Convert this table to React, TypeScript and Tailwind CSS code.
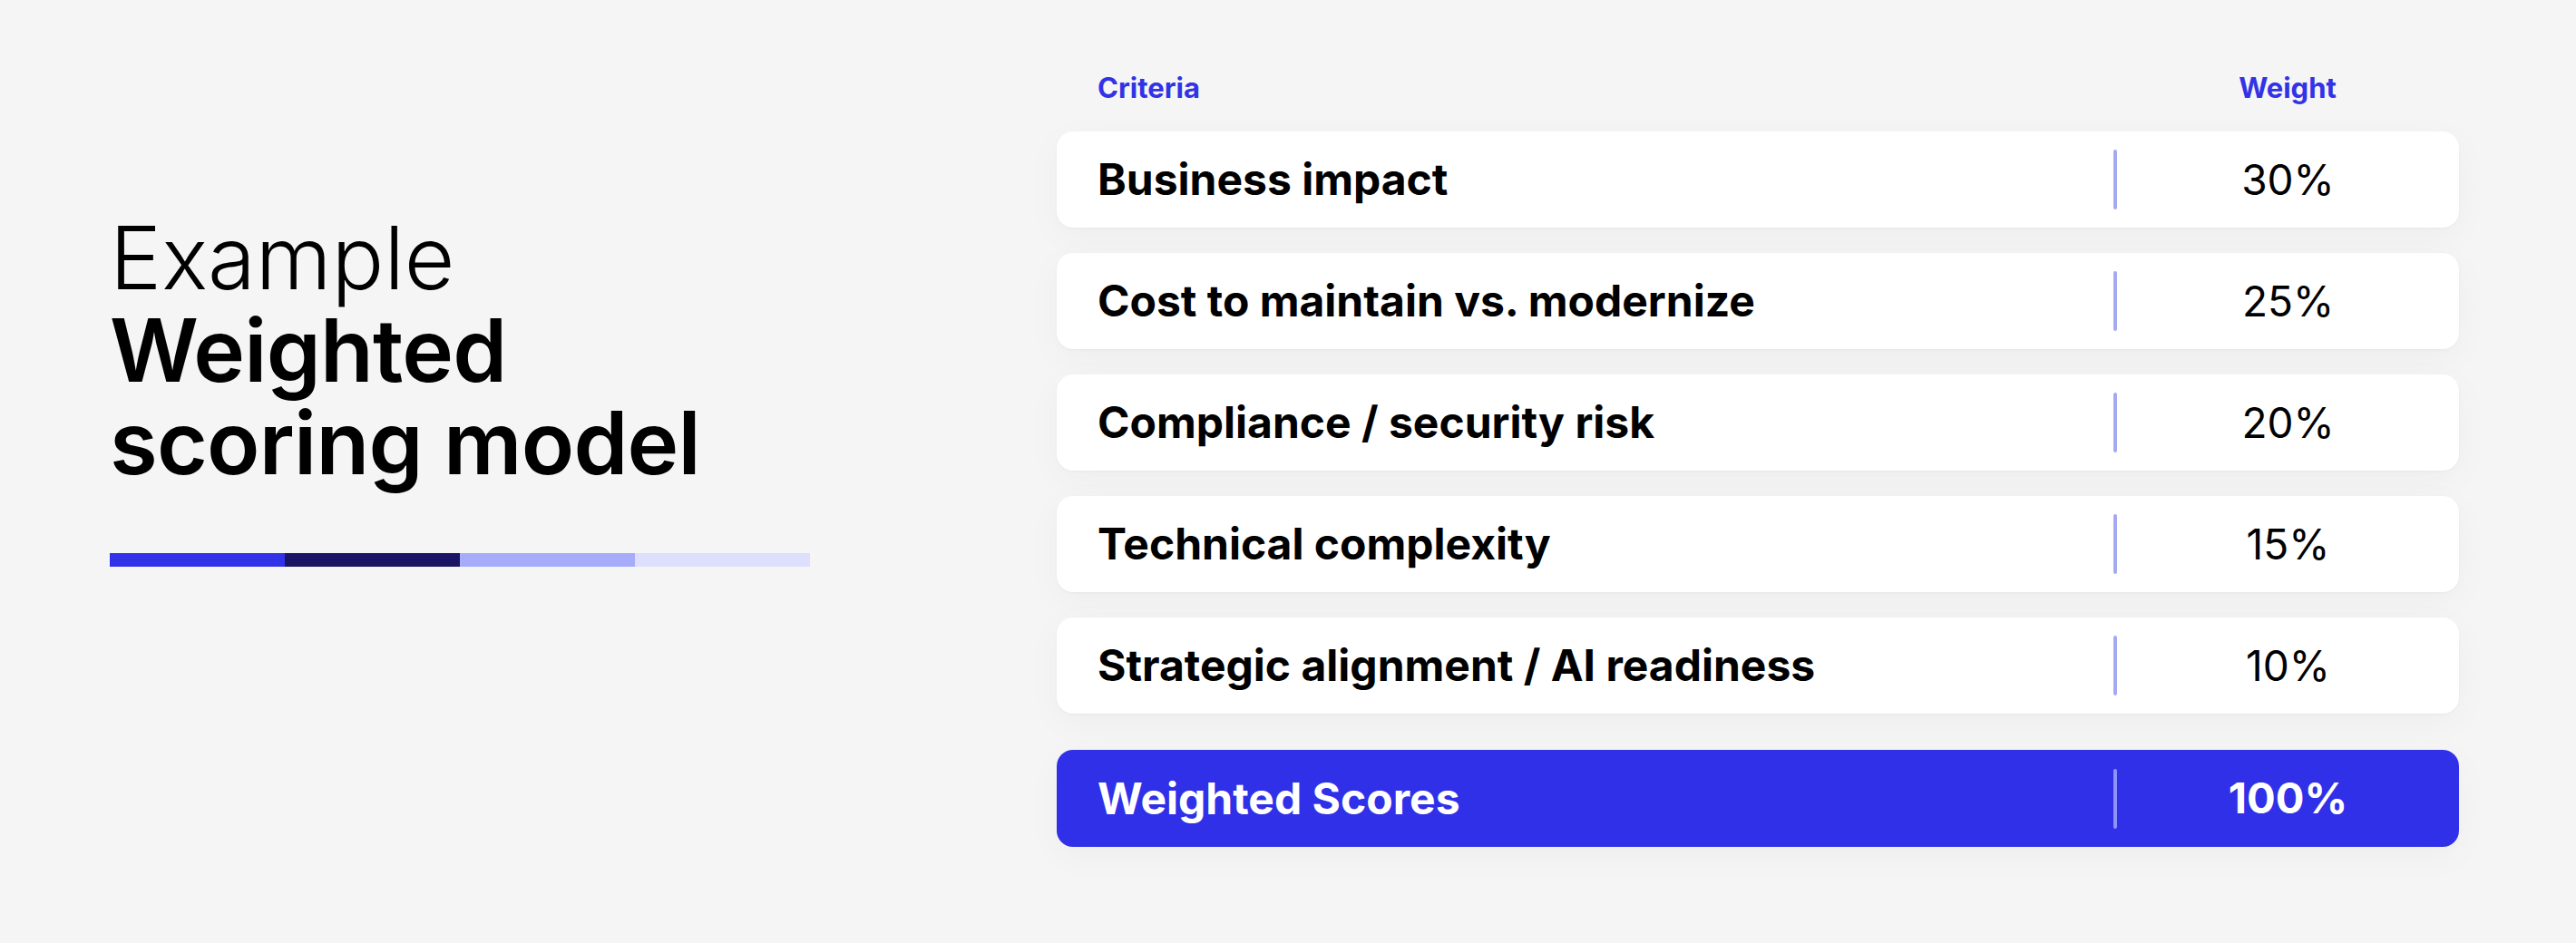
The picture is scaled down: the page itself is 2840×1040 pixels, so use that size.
import React from "react";

const rows = [
  { label: "Business impact", value: "30%" },
  { label: "Cost to maintain vs. modernize", value: "25%" },
  { label: "Compliance / security risk", value: "20%" },
  { label: "Technical complexity", value: "15%" },
  { label: "Strategic alignment / AI readiness", value: "10%" },
];

export default function App() {
  return (
    <div
      className="flex h-[1040px] w-[2840px] bg-[#f5f5f5] text-black"
      style={{ fontFamily: "Inter, 'Noto Sans', sans-serif" }}
    >
      <div className="w-[1165px] shrink-0 pl-[121px] pt-[233px]">
        <h1 className="text-[96px] leading-[102px]">
          <span className="block font-light">Example</span>
          <span className="block font-semibold tracking-[-0.008em]">Weighted</span>
          <span className="block font-semibold tracking-[-0.008em]">scoring model</span>
        </h1>
        <div className="mt-[71px] flex h-[15px] w-[772px]">
          <div className="flex-1 bg-[#3131e8]" />
          <div className="flex-1 bg-[#1b1464]" />
          <div className="flex-1 bg-[#a6abfa]" />
          <div className="flex-1 bg-[#dddffd]" />
        </div>
      </div>

      <div className="w-[1546px] shrink-0 pt-[79px]">
        <div className="flex h-[34px] items-center pl-[45px] text-[31px] font-bold leading-none text-[#3232e6]">
          <div className="flex-1">Criteria</div>
          <div className="w-[381px] pl-[3px] text-center">Weight</div>
        </div>
        <div className="mt-[32px] flex flex-col gap-[28px]">
          {rows.map((r) => (
            <div
              key={r.label}
              className="flex h-[106px] items-center rounded-[18px] bg-white pl-[45px] shadow-[0_10px_40px_rgba(0,0,0,0.035),0_1px_3px_rgba(0,0,0,0.04)]"
            >
              <div className="flex-1 text-[48px] font-bold">{r.label}</div>
              <div className="h-[66px] w-[4px] rounded-full bg-[#a4aaf2]" />
              <div className="w-[377px] text-center text-[46px] font-normal">{r.value}</div>
            </div>
          ))}
        </div>
        <div className="mt-[40px] flex h-[107px] items-center rounded-[18px] bg-[#3030e9] pl-[45px] text-white shadow-[0_10px_40px_rgba(0,0,0,0.035)]">
          <div className="flex-1 text-[48px] font-bold">Weighted Scores</div>
          <div className="h-[66px] w-[4px] rounded-full bg-[#8f93f7]" />
          <div className="w-[377px] text-center text-[47px] font-bold">100%</div>
        </div>
      </div>
    </div>
  );
}
